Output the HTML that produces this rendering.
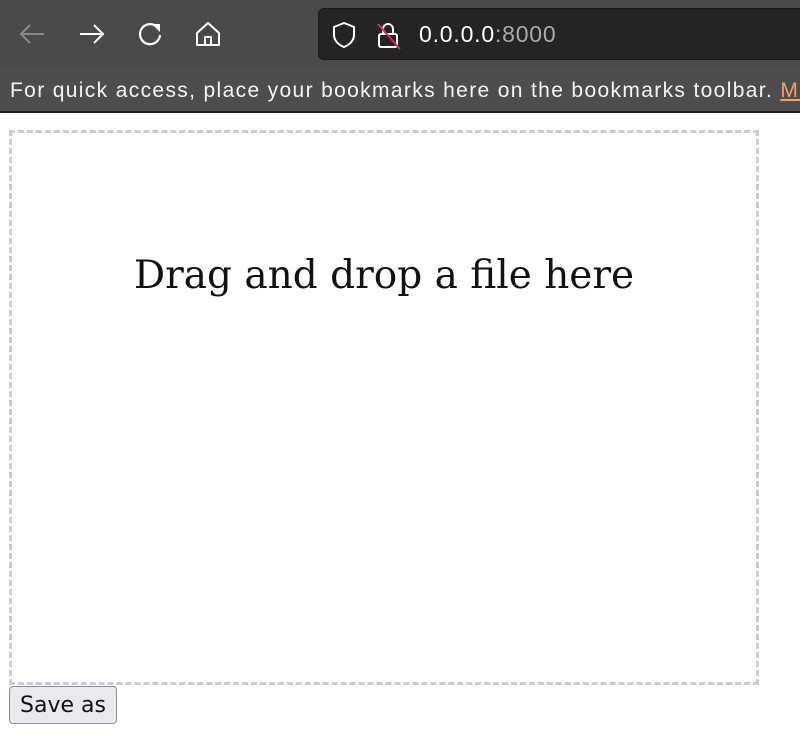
<!DOCTYPE html>
<html><head><meta charset="utf-8"><style>
body{margin:0;width:800px;height:740px;overflow:hidden;background:#fff;font-family:"Liberation Sans",sans-serif;position:relative}
.tb{position:absolute;left:0;top:0;width:800px;height:68px;background:#4a4a4a;overflow:hidden}
.bm{position:absolute;left:0;top:68px;width:800px;height:45px;background:#4d4d4d;border-bottom:2px solid #1e1e1e;color:#f4f4f4;font-size:21px;line-height:45px;padding-left:10px;box-sizing:border-box;white-space:nowrap;overflow:hidden;letter-spacing:1.35px}
.bm span{color:#f0a070;text-decoration:underline}
.url{position:absolute;left:318px;top:8px;width:500px;height:50px;background:#242424;border-radius:6px;border:1px solid #1a1a1a}
.url .t{position:absolute;left:100px;top:0;line-height:50px;font-size:23px;color:#fff;letter-spacing:0.8px}
.url .t i{font-style:normal;color:#aaa}
svg{position:absolute}
.drop{position:absolute;left:9px;top:130px;width:750px;height:555px;box-sizing:border-box;border:3px dashed #ccc;text-align:center}
.drop div{position:absolute;left:0;right:0;top:120px;font-family:"DejaVu Serif",serif;font-size:39px;color:#111;white-space:nowrap}
.btn{position:absolute;left:9px;top:686px;width:108px;height:38px;box-sizing:border-box;border:1px solid #8f8f9d;border-radius:4px;background:#e9e9ed;font-family:"DejaVu Sans",sans-serif;font-size:22px;line-height:38px;text-align:center;color:#111}
</style></head><body>
<div class="tb">
<svg style="left:18px;top:22px" width="28" height="24" viewBox="0 0 28 24"><path d="M26 12H3M12 3L3 12l9 9" fill="none" stroke="#8a8a8a" stroke-width="2"/></svg>
<svg style="left:78px;top:22px" width="28" height="24" viewBox="0 0 28 24"><path d="M2 12h23M16 3l9 9-9 9" fill="none" stroke="#fff" stroke-width="2"/></svg>
<svg style="left:137px;top:21px" width="26" height="26" viewBox="0 0 26 26"><path d="M20 6A10 10 0 1 0 23 14" fill="none" stroke="#fff" stroke-width="2.2"/><path d="M15 3h8v8z" fill="#fff"/></svg>
<svg style="left:195px;top:21px" width="26" height="26" viewBox="0 0 26 26"><path d="M2 12L13 2l11 10v12H2z M10 24v-8h6v8" fill="none" stroke="#fff" stroke-width="2" stroke-linejoin="round"/></svg>
<div class="url">
<svg style="left:12px;top:12px" width="26" height="28" viewBox="0 0 26 28"><path d="M13 2L3 6v8c0 6 5 10 10 12 5-2 10-6 10-12V6z" fill="none" stroke="#fff" stroke-width="2"/></svg>
<svg style="left:56px;top:12px" width="28" height="30" viewBox="0 0 28 30"><rect x="4" y="13" width="18" height="13" rx="2" fill="none" stroke="#fff" stroke-width="2"/><path d="M8 13V8a5 5 0 0 1 10 0v5" fill="none" stroke="#fff" stroke-width="2"/><path d="M3 3l22 25" stroke="#e22850" stroke-width="2"/></svg>
<div class="t">0.0.0.0<i>:8000</i></div>
</div>
</div>
<div class="bm">For quick access, place your bookmarks here on the bookmarks toolbar. <span>Manage bookmarks…</span></div>
<div class="drop"><div>Drag and drop a file here</div></div>
<div class="btn">Save as</div>
</body></html>
